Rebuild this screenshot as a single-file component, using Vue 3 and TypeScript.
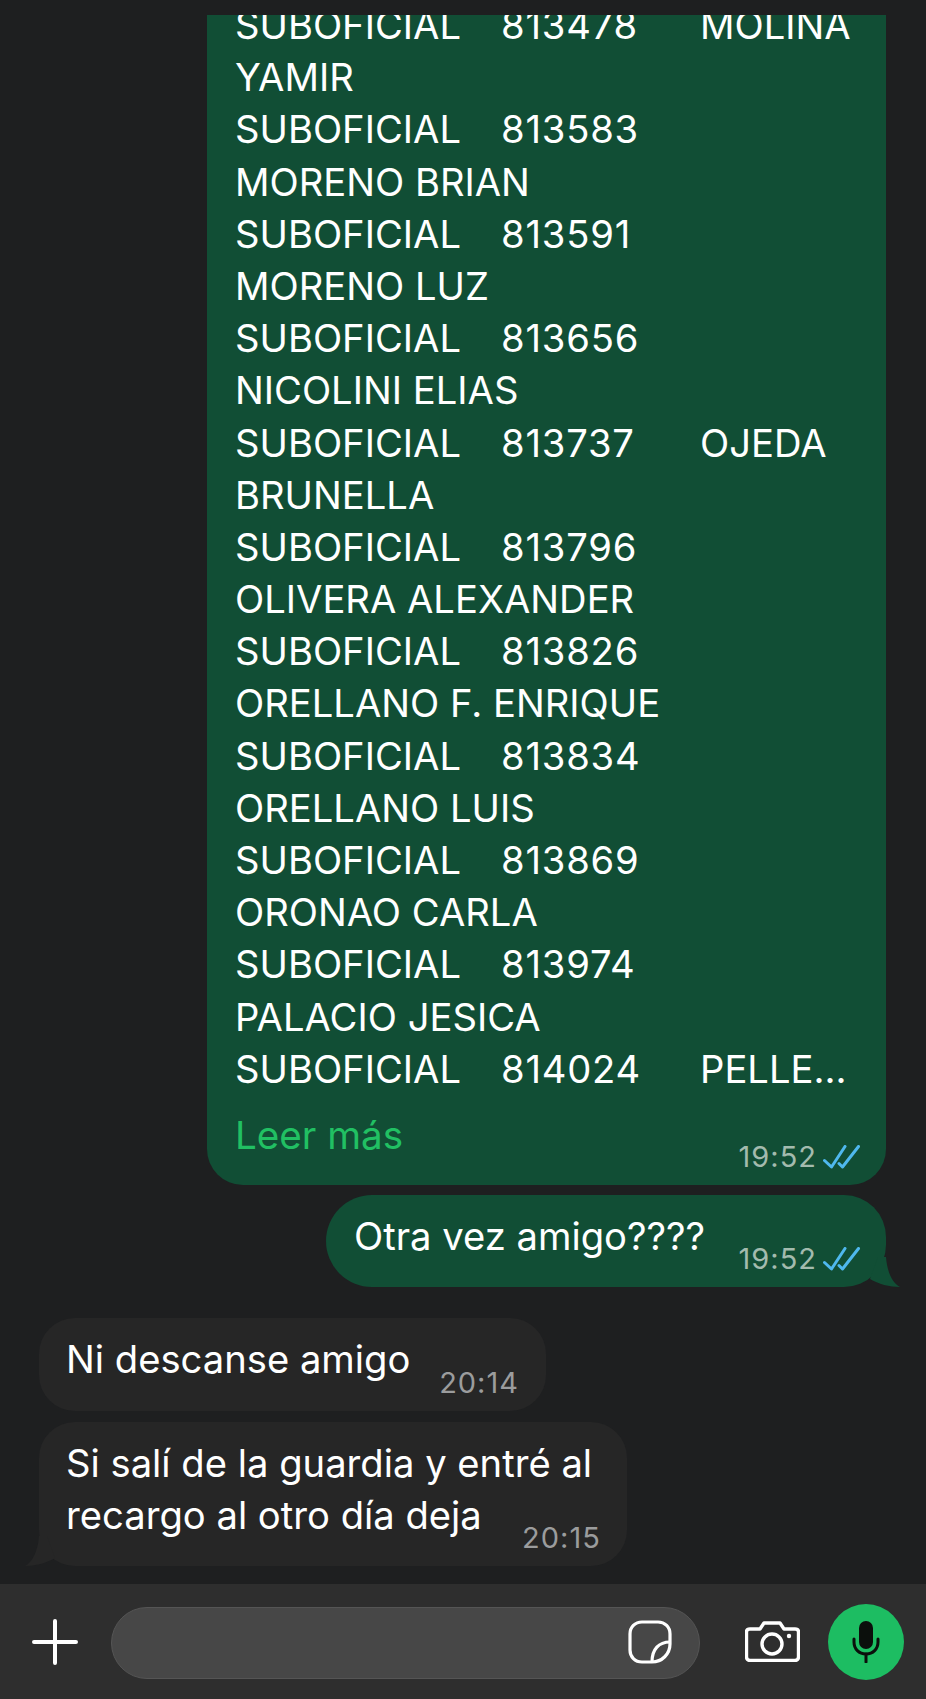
<script setup lang="ts">
const lines: string[][] = [
  ['SUBOFICIAL', '813478', 'MOLINA'],
  ['YAMIR'],
  ['SUBOFICIAL', '813583'],
  ['MORENO BRIAN'],
  ['SUBOFICIAL', '813591'],
  ['MORENO LUZ'],
  ['SUBOFICIAL', '813656'],
  ['NICOLINI ELIAS'],
  ['SUBOFICIAL', '813737', 'OJEDA'],
  ['BRUNELLA'],
  ['SUBOFICIAL', '813796'],
  ['OLIVERA ALEXANDER'],
  ['SUBOFICIAL', '813826'],
  ['ORELLANO F. ENRIQUE'],
  ['SUBOFICIAL', '813834'],
  ['ORELLANO LUIS'],
  ['SUBOFICIAL', '813869'],
  ['ORONAO CARLA'],
  ['SUBOFICIAL', '813974'],
  ['PALACIO JESICA'],
  ['SUBOFICIAL', '814024', 'PELLE...'],
]
</script>

<template>
  <div class="page">
    <div class="chat">
      <div class="bubble out long">
        <div class="lines">
          <div v-for="(line, i) in lines" :key="i" class="line">
            <span v-for="(cell, j) in line" :key="j" :class="line.length > 1 ? 'cell c' + j : ''">{{ cell }}</span>
          </div>
        </div>
        <div class="foot">
          <span class="more">Leer más</span>
          <span class="meta">
            <span class="time">19:52</span>
            <svg class="ticks" viewBox="0 0 38 24" fill="none" stroke="#4fb8ee" stroke-width="3" stroke-linecap="round" stroke-linejoin="round">
              <path d="M1.5 15.5 L8.5 22 L22 1.5" />
              <path d="M16 18.5 L19.5 22 L35.5 1.5" />
            </svg>
          </span>
        </div>
      </div>

      <div class="bubble out short">
        <span class="text">Otra vez amigo????</span>
        <span class="meta">
          <span class="time">19:52</span>
          <svg class="ticks" viewBox="0 0 38 24" fill="none" stroke="#4fb8ee" stroke-width="3" stroke-linecap="round" stroke-linejoin="round">
            <path d="M1.5 15.5 L8.5 22 L22 1.5" />
            <path d="M16 18.5 L19.5 22 L35.5 1.5" />
          </svg>
        </span>
        <svg class="tail tail-out" viewBox="0 0 32 30"><path d="M10 0 L18 0 C19 14 24 26 32 30 C22 30 10 27 2 22 Z" fill="#114e35" /></svg>
      </div>

      <div class="bubble in first">
        <span class="text">Ni descanse amigo</span>
        <span class="time">20:14</span>
      </div>

      <div class="bubble in second">
        <span class="text">Si salí de la guardia y entré al<br />recargo al otro día deja</span>
        <span class="time">20:15</span>
        <svg class="tail tail-in" viewBox="0 0 32 30"><path d="M22 0 L14 0 C13 14 8 26 0 30 C10 30 22 27 30 22 Z" fill="#262626" /></svg>
      </div>
    </div>

    <div class="bar">
      <svg class="plus" viewBox="0 0 46 46" fill="none" stroke="#fff" stroke-width="4" stroke-linecap="round">
        <path d="M23 2 V44 M2 23 H44" />
      </svg>
      <div class="input">
        <svg class="sticker" viewBox="0 0 44 44" fill="none" stroke="#fff" stroke-width="3.2" stroke-linejoin="round">
          <path d="M14 2 H30 C37 2 42 7 42 14 V24 C42 34 34 42 24 42 H14 C7 42 2 37 2 30 V14 C2 7 7 2 14 2 Z" />
          <path d="M42 22 C31 22 24 29 24 42" />
        </svg>
      </div>
      <svg class="camera" viewBox="0 0 55 41" fill="none" stroke="#fff" stroke-width="3.4" stroke-linejoin="round">
        <path d="M5 8 H15 L19 2 H35 L39 8 H50 C52 8 53.5 9 53.5 11 V36 C53.5 38 52 39.5 50 39.5 H5 C3 39.5 1.5 38 1.5 36 V11 C1.5 9 3 8 5 8 Z" />
        <circle cx="27" cy="23" r="10" />
        <circle cx="44" cy="15" r="2.2" fill="#fff" stroke="none" />
      </svg>
      <div class="mic">
        <svg viewBox="0 0 30 42" width="30" height="42" fill="none" stroke="#0b0f0c" stroke-width="3" stroke-linecap="round">
          <rect x="8" y="0" width="14" height="28" rx="7" fill="#0b0f0c" stroke="none" />
          <path d="M3 18 V21 C3 28 8 33 15 33 C22 33 27 28 27 21 V18" />
          <path d="M15 33 V41" />
        </svg>
      </div>
    </div>
  </div>
</template>

<style>
html, body { margin: 0; background: #1e1f20; }
</style>

<style scoped>
.page {
  width: 926px;
  height: 1699px;
  display: flex;
  flex-direction: column;
  overflow: hidden;
  background: #1e1f20;
  color: #fff;
  font-family: Inter, "Liberation Sans", sans-serif;
  font-size: 38.2px;
  line-height: 52.2px;
  font-weight: 400;
}
.chat { height: 1584px; flex: none; padding-top: 15px; box-sizing: border-box; display: flex; flex-direction: column; }
.bubble { position: relative; box-sizing: border-box; white-space: nowrap; }
.out { background: #114e35; align-self: flex-end; margin-right: 40px; }
.in { background: #262626; align-self: flex-start; margin-left: 39px; border-radius: 36px; }

.long { width: 679px; height: 1170px; padding: 0 29px 0 29px; overflow: hidden; border-radius: 0 0 36px 36px; }
.lines { margin-top: -16px; margin-left: -1px; }
.line { display: flex; height: 52.2px; }
.cell { display: block; }
.c0 { width: 266px; }
.c1 { width: 199px; letter-spacing: 0.8px; }
.foot { display: flex; justify-content: space-between; align-items: flex-end; margin-top: 14px; margin-left: -1px; }
.more { color: #21c063; font-size: 38.6px; }
.meta { display: flex; align-items: center; gap: 6px; margin-right: -4px; }
.long .meta { margin-bottom: -13px; }
.time { font-size: 29px; letter-spacing: 1px; color: #a3bbae; line-height: 34px; }
.ticks { width: 38px; height: 24px; }

.short { margin-top: 10px; width: 560px; height: 92px; border-radius: 46px 42px 42px 46px; padding: 15px 26px 0 28px; display: flex; justify-content: space-between; }
.short .meta { align-self: flex-end; margin-bottom: 11px; margin-right: -1px; }
.tail { position: absolute; bottom: 0; width: 32px; height: 30px; }
.tail-out { right: -14px; }
.tail-in { left: -14px; }

.in .time { color: #9b9c9d; align-self: flex-end; margin-bottom: 1px; }
.first { margin-top: 31px; width: 507px; height: 93px; padding: 15px 27px 10px 27px; display: flex; justify-content: space-between; }
.second { margin-top: 11px; width: 588px; height: 144px; padding: 15px 30px 10px 27px; display: flex; justify-content: space-between; }
.second .time { margin-left: -70px; }

.bar { height: 115px; flex: none; background: #2e2e2e; display: flex; align-items: center; padding: 0 0 0 32px; box-sizing: border-box; }
.plus { width: 46px; height: 46px; flex: none; }
.input { margin: 2px 0 0 33px; width: 589px; height: 72px; flex: none; box-sizing: border-box; border-radius: 36px; background: #474747; border: 1px solid #555; display: flex; align-items: center; justify-content: flex-end; padding-right: 27px; }
.sticker { width: 44px; height: 44px; margin-top: -2px; }
.camera { width: 55px; height: 41px; margin-left: 45px; flex: none; }
.mic { width: 76px; height: 76px; border-radius: 50%; background: #1dbd62; margin-left: 28px; flex: none; display: flex; align-items: center; justify-content: center; }
</style>
